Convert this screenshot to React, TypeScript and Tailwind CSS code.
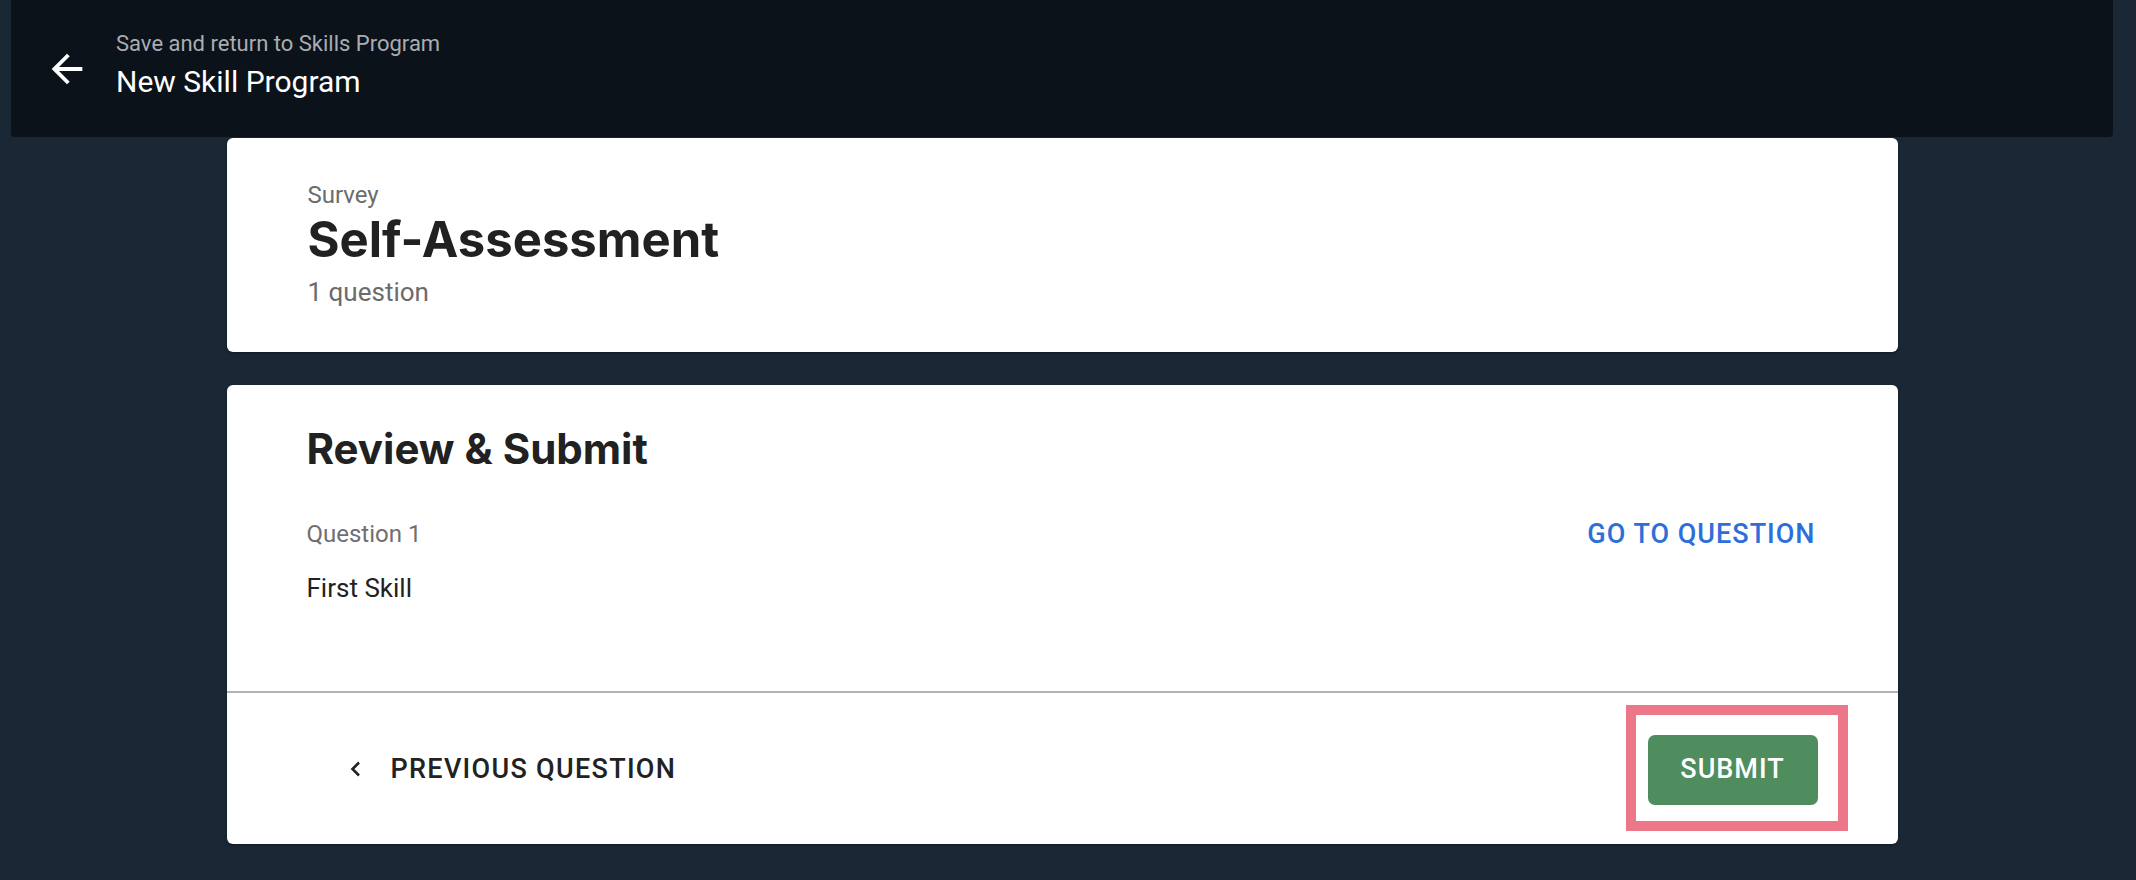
import React from 'react';

function BackArrow() {
  return (
    <svg width="46" height="46" viewBox="0 0 24 24" fill="#ffffff" aria-hidden>
      <path d="M20 11H7.83l5.59-5.59L12 4l-8 8 8 8 1.41-1.41L7.83 13H20v-2z" />
    </svg>
  );
}

function ChevronLeft() {
  return (
    <svg width="12" height="16" viewBox="0 0 12 16" fill="none" aria-hidden>
      <path d="M10 1.5L3.5 8l6.5 6.5" stroke="#222222" strokeWidth="2.6" />
    </svg>
  );
}

export default function App() {
  const heading = { fontFamily: 'Inter, "Noto Sans", sans-serif' };

  return (
    <div
      className="min-h-screen w-full bg-[#1a2735] pr-[12px] pb-[36px]"
      style={{ fontFamily: 'Roboto, "Liberation Sans", sans-serif' }}
    >
      {/* top bar */}
      <header className="mx-[11px] flex h-[137px] items-center rounded-b-[4px] bg-[#0c1219] pl-[33px]">
        <BackArrow />
        <div className="ml-[26px] flex flex-col pb-[8px]">
          <span className="text-[22px] leading-[28px] text-[#a9adb3]">
            Save and return to Skills Program
          </span>
          <span className="mt-[5px] text-[30px] leading-[37px] text-white">New Skill Program</span>
        </div>
      </header>

      <main className="mx-auto mt-[1px] flex w-[1671px] flex-col gap-[33px]">
        {/* survey card */}
        <section className="flex h-[214px] flex-col rounded-[6px] bg-white pl-[81px] pt-[42px] shadow-[0_1px_3px_rgba(0,0,0,0.35)]">
          <span className="text-[24px] leading-[30px] text-[#6b6b6b]">Survey</span>
          <h1 className="text-[49px] font-bold leading-[60px] text-[#212121]" style={heading}>
            Self-Assessment
          </h1>
          <span className="mt-[7px] text-[26px] leading-[30px] text-[#6b6b6b]">1 question</span>
        </section>

        {/* review card */}
        <section className="flex flex-col rounded-[6px] bg-white shadow-[0_1px_3px_rgba(0,0,0,0.35)]">
          <div className="flex h-[306px] flex-col pl-[80px] pr-[82px] pt-[38px]">
            <h2 className="text-[42px] font-bold leading-[52px] text-[#212121]" style={heading}>
              Review &amp; Submit
            </h2>
            <div className="mt-[44px] flex items-center justify-between">
              <span className="text-[24px] leading-[30px] text-[#6f6f6f]">Question 1</span>
              <button className="text-[27px] font-medium uppercase leading-[30px] tracking-[1px] text-[#2d6fd9]">
                Go to Question
              </button>
            </div>
            <span className="mt-[23px] text-[26px] leading-[32px] text-[#212121]">First Skill</span>
          </div>

          <div className="h-[2px] bg-[#b3b3b3]" />

          <div className="flex h-[151px] items-center justify-between pl-[122px] pr-[50px]">
            <button className="flex items-center gap-[30px]">
              <ChevronLeft />
              <span className="text-[27px] font-medium uppercase leading-[30px] tracking-[1.3px] text-[#222222]">
                Previous Question
              </span>
            </button>
            <div className="mb-[2px] border-[10px] border-[#ec7789] pb-[16px] pl-[12px] pr-[20px] pt-[20px]">
              <button className="flex h-[70px] w-[170px] items-center justify-center rounded-[7px] bg-[#4f8c5e] text-[27px] font-medium uppercase tracking-[1px] text-white">
                Submit
              </button>
            </div>
          </div>
        </section>
      </main>
    </div>
  );
}
